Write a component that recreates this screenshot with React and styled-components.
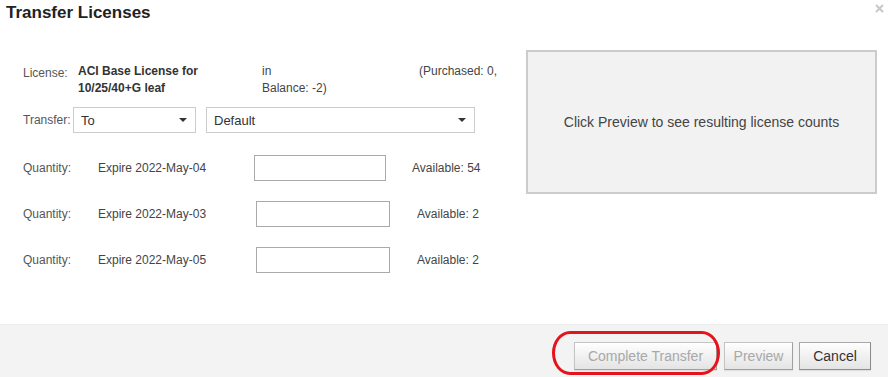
import React from "react";
import styled, { createGlobalStyle } from "styled-components";

const GlobalStyle = createGlobalStyle`
  html, body {
    margin: 0;
    padding: 0;
    background: #fff;
  }
  body {
    font-family: "Liberation Sans", Arial, sans-serif;
    color: #333;
  }
`;

const quantities = [
  { expire: "Expire 2022-May-04", available: 54, shift: 0 },
  { expire: "Expire 2022-May-03", available: 2, shift: 2 },
  { expire: "Expire 2022-May-05", available: 2, shift: 2 },
];

const App = () => {
  return (
    <>
      <GlobalStyle />
      <Dialog>
        <Header>
          <Title>Transfer Licenses</Title>
          <Close aria-label="close">
            <svg width="9" height="9" viewBox="0 0 9 9">
              <path d="M1 1L8 8M8 1L1 8" stroke="#c8c8c8" strokeWidth="2" />
            </svg>
          </Close>
        </Header>

        <Body>
          <Form>
            <LicenseRow>
              <Label>License:</Label>
              <LicenseName>
                ACI Base License for
                <br />
                10/25/40+G leaf
              </LicenseName>
              <Plain>
                in
                <br />
                Balance: -2)
              </Plain>
              <Plain>(Purchased: 0,</Plain>
            </LicenseRow>

            <TransferRow>
              <Label>Transfer:</Label>
              <Select width={123}>
                <span>To</span>
                <Caret />
              </Select>
              <Select width={269}>
                <span>Default</span>
                <Caret />
              </Select>
            </TransferRow>

            {quantities.map((q, i) => (
              <QuantityRow key={q.expire} shift={q.shift} first={i === 0}>
                <Label>Quantity:</Label>
                <Plain>{q.expire}</Plain>
                <QtyInput />
                <Available shift={q.shift}>Available: {q.available}</Available>
              </QuantityRow>
            ))}
          </Form>

          <PreviewPanel>Click Preview to see resulting license counts</PreviewPanel>
        </Body>

        <Footer>
          <Highlight>
            <Button disabled width={143}>
              Complete Transfer
            </Button>
            <Ring />
          </Highlight>
          <Button disabled width={69}>
            Preview
          </Button>
          <Button width={72}>Cancel</Button>
        </Footer>
      </Dialog>
    </>
  );
};

const Dialog = styled.div`
  width: 888px;
  height: 377px;
  display: flex;
  flex-direction: column;
  background: #fff;
  overflow: hidden;
`;

const Header = styled.div`
  display: flex;
  justify-content: space-between;
  align-items: flex-start;
  padding: 3px 4px 0 6px;
  height: 25px;
`;

const Title = styled.h1`
  margin: 0;
  font-size: 17px;
  line-height: 20px;
  font-weight: bold;
  color: #222;
`;

const Close = styled.span`
  display: flex;
  margin-top: 1px;
`;

const Body = styled.div`
  display: flex;
  justify-content: space-between;
  padding: 22px 11px 0 23px;
  flex: 1;
`;

const Form = styled.div`
  display: flex;
  flex-direction: column;
  margin-top: 13px;
  width: 480px;
`;

const Label = styled.span`
  font-size: 12px;
  color: #555;
`;

const Plain = styled.span`
  font-size: 12px;
  line-height: 17px;
  color: #444;
  white-space: nowrap;
`;

const LicenseRow = styled.div`
  display: grid;
  grid-template-columns: 55px 184px 157px auto;
  align-items: start;
  font-size: 12px;
  line-height: 17px;

  ${Label} {
    padding-top: 2px;
  }
`;

const LicenseName = styled.span`
  font-size: 12px;
  line-height: 17px;
  font-weight: bold;
  color: #333;
`;

const TransferRow = styled.div`
  display: flex;
  align-items: center;
  margin-top: 10px;

  ${Label} {
    width: 50px;
  }
`;

const Select = styled.div`
  box-sizing: border-box;
  width: ${(p) => p.width}px;
  height: 26px;
  margin-right: 10px;
  padding: 0 8px 0 7px;
  border: 1px solid #ccc;
  background: #fff;
  display: flex;
  align-items: center;
  justify-content: space-between;
  font-size: 13px;
  color: #333;
`;

const Caret = styled.i`
  width: 0;
  height: 0;
  border-left: 4px solid transparent;
  border-right: 4px solid transparent;
  border-top: 4px solid #333;
`;

const QuantityRow = styled.div`
  display: grid;
  grid-template-columns: 75px ${(p) => 156 + p.shift}px ${(p) => 132 + p.shift}px auto;
  align-items: center;
  height: 26px;
  margin-top: ${(p) => (p.first ? 22 : 20)}px;
`;

const QtyInput = styled.input`
  box-sizing: border-box;
  width: 100%;
  height: 26px;
  border: 1px solid #aaa;
  margin: 0;
  padding: 0 4px;
  background: #fff;
`;

const Available = styled(Plain)`
  padding-left: ${(p) => 26 + p.shift / 2}px;
`;

const PreviewPanel = styled.div`
  box-sizing: border-box;
  width: 351px;
  height: 144px;
  border: 2px solid #ccc;
  background: #f2f2f2;
  display: flex;
  align-items: center;
  justify-content: center;
  font-size: 14px;
  color: #444;
`;

const Footer = styled.div`
  height: 53px;
  box-sizing: border-box;
  background: #f3f3f3;
  border-top: 1px solid #ececec;
  display: flex;
  justify-content: flex-end;
  align-items: flex-start;
  gap: 6px;
  padding: 17px 17px 0 0;
`;

const Highlight = styled.span`
  position: relative;
  display: flex;
  margin-right: 1px;
`;

const Ring = styled.span`
  position: absolute;
  left: -22px;
  right: -3px;
  top: -11px;
  bottom: -5px;
  border: 3px solid #e5141c;
  border-radius: 18px / 22px;
  pointer-events: none;
`;

const Button = styled.button`
  box-sizing: border-box;
  width: ${(p) => p.width}px;
  height: 28px;
  padding: 0;
  border: 1px solid #a8a8a8;
  border-right-color: #8c8c8c;
  border-bottom-color: #8c8c8c;
  background: linear-gradient(#fefefe, #e4e4e4);
  font-family: "Liberation Sans", Arial, sans-serif;
  font-size: 14px;
  color: #333;
  box-shadow: 0 1px 1px rgba(0, 0, 0, 0.08);

  &:disabled {
    color: #a8a8a8;
    border-color: #c4c4c4;
    border-right-color: #a0a0a0;
    border-bottom-color: #a0a0a0;
  }
`;

export default App;
